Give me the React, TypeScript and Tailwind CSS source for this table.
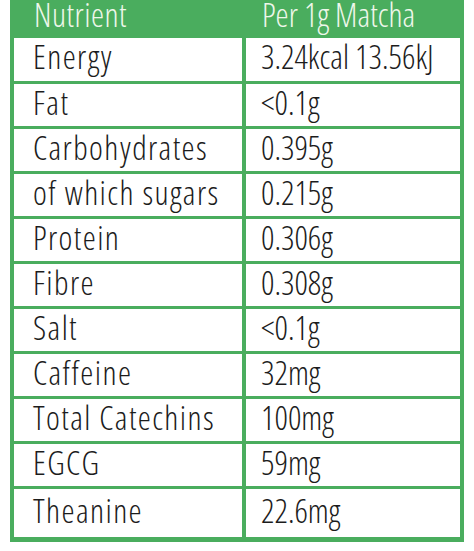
const rows: [string, string][] = [
  ["Energy", "3.24kcal 13.56kJ"],
  ["Fat", "<0.1g"],
  ["Carbohydrates", "0.395g"],
  ["of which sugars", "0.215g"],
  ["Protein", "0.306g"],
  ["Fibre", "0.308g"],
  ["Salt", "<0.1g"],
  ["Caffeine", "32mg"],
  ["Total Catechins", "100mg"],
  ["EGCG", "59mg"],
  ["Theanine", "22.6mg"],
]

export default function App() {
  return (
    <div className="w-[474px] h-[551px] bg-white px-[10px] font-['Open_Sans',sans-serif] font-light [font-stretch:condensed] text-[33px] text-[#1c1c1c]">
      <div className="bg-[#4aad5e] pb-[5px] px-[4px]">
        {/* header */}
        <div className="flex h-[38px] text-[#eef7ea] leading-[30px]">
          <div className="w-[232px] pl-[20px] tracking-[0.5px]">Nutrient</div>
          <div className="flex-1 pl-[16px]">Per 1g Matcha</div>
        </div>

        {/* rows */}
        <div className="flex flex-col gap-[3px]">
          {rows.map(([name, value], i) => (
            <div
              key={name}
              className={`flex gap-[4px] leading-[36px] ${
                i === 0 ? "h-[43px]" : i === rows.length - 1 ? "h-[48px]" : "h-[42px]"
              }`}
            >
              <div className="w-[228px] bg-white flex items-center pl-[19px] pb-[5px] whitespace-nowrap tracking-[1.4px]">
                {name}
              </div>
              <div className="flex-1 bg-white flex items-center pl-[15px] pb-[5px] whitespace-nowrap">
                {value}
              </div>
            </div>
          ))}
        </div>
      </div>
    </div>
  )
}
